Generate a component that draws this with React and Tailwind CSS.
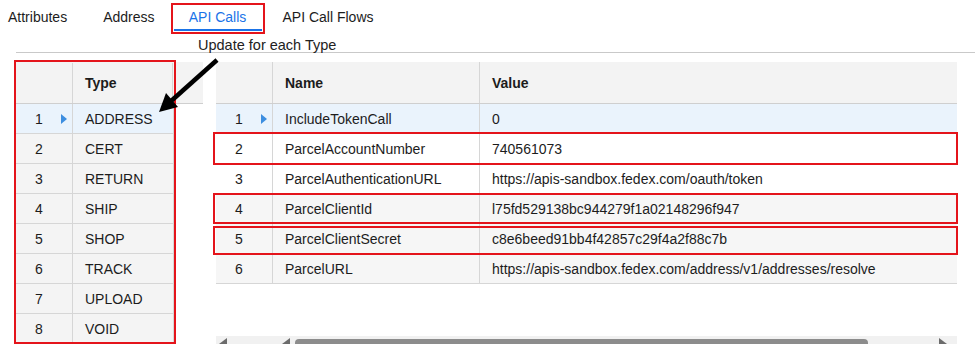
import React from "react";

const leftRows = ["ADDRESS", "CERT", "RETURN", "SHIP", "SHOP", "TRACK", "UPLOAD", "VOID"];
const rightRows = [
  ["IncludeTokenCall", "0"],
  ["ParcelAccountNumber", "740561073"],
  ["ParcelAuthenticationURL", "https://apis-sandbox.fedex.com/oauth/token"],
  ["ParcelClientId", "l75fd529138bc944279f1a02148296f947"],
  ["ParcelClientSecret", "c8e6beed91bb4f42857c29f4a2f88c7b"],
  ["ParcelURL", "https://apis-sandbox.fedex.com/address/v1/addresses/resolve"],
];

function Marker() {
  return (
    <svg width="6" height="10" viewBox="0 0 6 10" className="ml-auto mr-[5px]">
      <path d="M0 0 L6 5 L0 10 Z" fill="#3d8ee0" />
    </svg>
  );
}

export default function App() {
  return (
    <div className="relative w-[975px] h-[344px] overflow-hidden bg-white font-['Liberation_Sans',Arial,sans-serif] text-[14px] text-[#1c1c1c]">
      {/* Tabs */}
      <div className="flex h-[35px] items-start">
        <div className="ml-2 mt-[9px] leading-[16px]">Attributes</div>
        <div className="ml-[36px] mt-[9px] leading-[16px]">Address</div>
        <div className="relative ml-4 mt-[3px] flex h-[31px] w-[94px] items-start justify-center border-2 border-[#e4141b] pt-[4px] leading-[16px] text-[#1a73e8]">
          API Calls
          <div className="absolute bottom-[1px] left-[1px] right-[1px] h-[2px] bg-[#1a73e8]" />
        </div>
        <div className="ml-[18px] mt-[9px] leading-[16px]">API Call Flows</div>
      </div>

      {/* Label + divider */}
      <div className="h-[17px] pl-[198px] text-[14.5px] leading-[20px] text-[#222]">Update for each Type</div>
      <div className="ml-4 h-px bg-[#c9c9c9]" />

      {/* Grids */}
      <div className="mt-[9px] flex pl-4">
        {/* Left grid */}
        <div className="flex w-[187px] flex-col">
          <div className="flex h-[42px] items-stretch border-b border-[#cfcfcf] bg-[#f3f3f3] pt-px">
            <div className="w-[57px] border-r border-[#d6d6d6]" />
            <div className="flex w-[100px] items-center border-r border-[#d6d6d6] pl-3 font-bold">Type</div>
          </div>
          {leftRows.map((t, i) => (
            <div
              key={t}
              className={`flex h-[30px] w-[158px] items-stretch border-b border-[#d6d6d6] ${i === 0 ? "bg-[#eaf3fc]" : "bg-[#f4f4f4]"}`}
            >
              <div className="flex w-[57px] items-center border-r border-[#d6d6d6] pl-[19px] pt-px">
                {i + 1}
                {i === 0 && <Marker />}
              </div>
              <div className="flex flex-1 items-center border-r border-[#d6d6d6] pl-3 pt-px">{t}</div>
            </div>
          ))}
        </div>

        {/* Right grid */}
        <div className="ml-[13px] flex h-[282px] w-[741px] flex-col">
          <div className="flex h-[42px] items-stretch border-b border-[#cfcfcf] bg-[#f3f3f3] font-bold">
            <div className="w-[57px] border-r border-[#d6d6d6]" />
            <div className="flex w-[207px] items-center border-r border-[#d6d6d6] pl-3 pt-px">Name</div>
            <div className="flex flex-1 items-center pl-3 pt-px">Value</div>
          </div>
          {rightRows.map(([n, v], i) => (
            <div
              key={n}
              className={`flex h-[30px] items-stretch border-b border-[#d6d6d6] ${i === 0 ? "bg-[#eaf3fc]" : i >= 3 ? "bg-[#f6f6f6]" : "bg-white"}`}
            >
              <div className="flex w-[57px] items-center border-r border-[#d6d6d6] pl-[19px] pt-px">
                {i + 1}
                {i === 0 && <Marker />}
              </div>
              <div className="flex w-[207px] items-center border-r border-[#d6d6d6] pl-3 pt-px">{n}</div>
              <div className="flex flex-1 items-center pl-3 pt-px">{v}</div>
            </div>
          ))}
          {/* Horizontal scrollbar */}
          <div className="mt-auto flex h-[8px] items-end bg-[#f1f1f1]">
            <svg width="8" height="6" viewBox="0 0 8 6" className="ml-[3px]">
              <path d="M0 6 L8 0 L8 6 Z" fill="#6b6b6b" />
            </svg>
            <svg width="8" height="6" viewBox="0 0 8 6" className="ml-[55px]">
              <path d="M0 6 L8 0 L8 6 Z" fill="#6b6b6b" />
            </svg>
            <div className="ml-[5px] h-[5px] w-[573px] rounded-t-[4px] bg-[#8c8c8c]" />
            <svg width="8" height="6" viewBox="0 0 8 6" className="ml-auto mr-[10px]">
              <path d="M0 0 L8 6 L0 6 Z" fill="#6b6b6b" />
            </svg>
          </div>
        </div>
      </div>

      {/* Annotation overlays */}
      <div className="pointer-events-none absolute left-[14px] top-[60px] h-[284px] w-[162px] border-2 border-[#e4141b]" />
      <div className="pointer-events-none absolute left-[213px] top-[132px] h-[33px] w-[745px] border-2 border-[#e4141b]" />
      <div className="pointer-events-none absolute left-[213px] top-[193px] h-[31px] w-[745px] border-2 border-[#e4141b]" />
      <div className="pointer-events-none absolute left-[213px] top-[226px] h-[29px] w-[745px] border-2 border-[#e4141b]" />
      <svg className="pointer-events-none absolute left-0 top-0" width="975" height="344">
        <line x1="217" y1="60" x2="170" y2="102" stroke="#000" strokeWidth="4.5" />
        <path d="M159 112 L178 107 L166 93 Z" fill="#000" />
      </svg>
    </div>
  );
}
